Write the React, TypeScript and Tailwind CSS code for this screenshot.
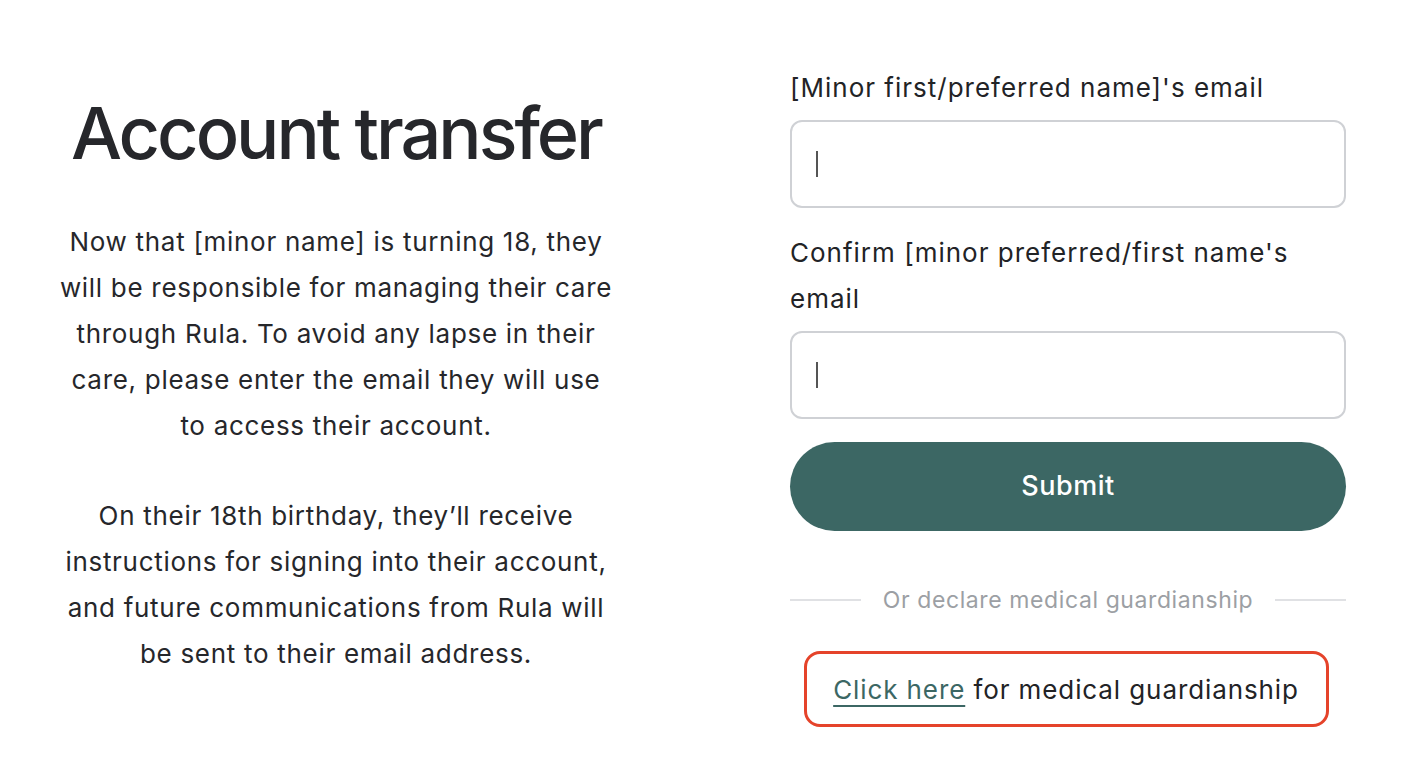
import { useState } from 'react';

const font = { fontFamily: 'Inter, "Noto Sans", sans-serif' };

const EmailField = (props: { label: React.ReactNode }) => {
  const [value, setValue] = useState('');
  return (
    <div className="flex flex-col">
      <label className="text-[26px] leading-[46px] text-[#222326] tracking-[1px]">{props.label}</label>
      <div className="mt-[9px] h-[88px] rounded-[12px] border-2 border-[#cfd1d5] bg-white flex items-center px-[24px]">
        <span className="w-[2px] h-[26px] bg-[#555] mr-[-2px]"></span>
        <input
          className="flex-1 h-full outline-none bg-transparent text-[24px] text-[#222326]"
          value={value}
          onChange={(e) => setValue(e.target.value)}
        />
      </div>
    </div>
  );
};

export default function App() {
  return (
    <div className="w-[1408px] h-[770px] bg-white flex" style={font}>
      <div className="w-[672px] flex flex-col items-center pt-[93px]">
        <h1 className="text-[72px] leading-[80px] font-medium tracking-[-3px] text-[#26272b]">Account transfer</h1>
        <div className="mt-[46px] w-[600px] text-center text-[26px] leading-[46px] text-[#26272b] tracking-[0.7px]">
          <p>
            Now that [minor name] is turning 18, they
            <br />
            will be responsible for managing their care
            <br />
            through Rula. To avoid any lapse in their
            <br />
            care, please enter the email they will use
            <br />
            to access their account.
          </p>
          <p className="mt-[44px]">
            On their 18th birthday, they’ll receive
            <br />
            instructions for signing into their account,
            <br />
            and future communications from Rula will
            <br />
            be sent to their email address.
          </p>
        </div>
      </div>
      <div className="ml-[118px] w-[556px] flex flex-col pt-[65px]">
        <EmailField label="[Minor first/preferred name]'s email" />
        <div className="mt-[22px]">
          <EmailField
            label={
              <>
                Confirm [minor preferred/first name's
                <br />
                email
              </>
            }
          />
        </div>
        <button className="mt-[23px] h-[89px] rounded-full bg-[#3c6764] text-white text-[27px] font-medium tracking-[0.5px]">
          Submit
        </button>
        <div className="mt-[53px] flex items-center gap-[22px]">
          <div className="flex-1 h-[1.5px] bg-[#e0e1e4]"></div>
          <span className="text-[23px] leading-[32px] text-[#9c9fa4] tracking-[0.6px]">
            Or declare medical guardianship
          </span>
          <div className="flex-1 h-[1.5px] bg-[#e0e1e4]"></div>
        </div>
        <div className="mt-[35px] flex justify-center">
          <div className="ml-[-4px] w-[525px] h-[76px] rounded-[16px] border-[3px] border-[#e5432a] flex items-center justify-center text-[26px] text-[#222326] tracking-[0.9px]">
            <a href="#" className="text-[#3c6764] underline underline-offset-[6px] decoration-[1.5px]">
              Click here
            </a>
            <span>&nbsp;for medical guardianship</span>
          </div>
        </div>
      </div>
    </div>
  );
}
